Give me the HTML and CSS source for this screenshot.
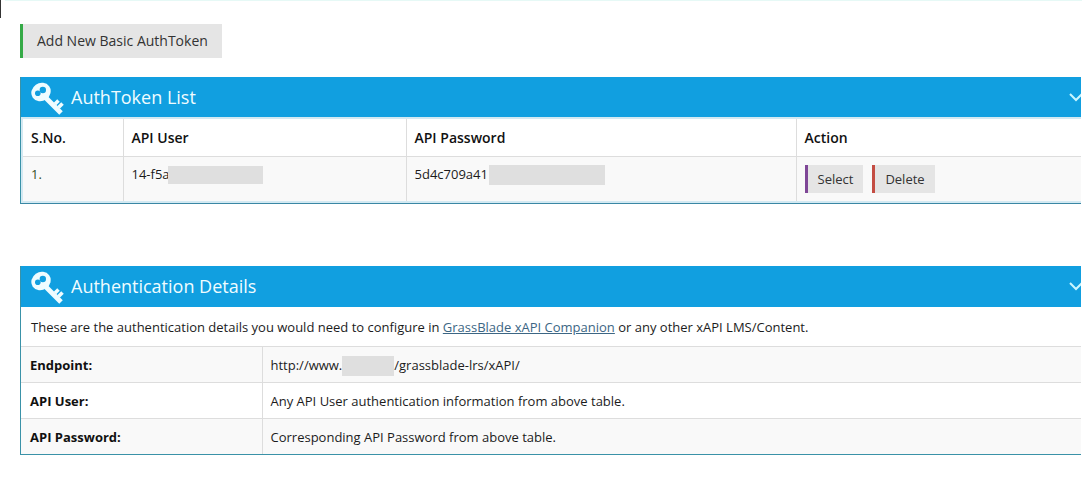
FILE: index.html
```html
<!DOCTYPE html>
<html lang="en">
<head>
<meta charset="utf-8">
<title>AuthTokens</title>
<link rel="stylesheet" href="styles.css">
</head>
<body>
<div class="edge"></div>
<main class="page">
  <button class="btn btn-add" type="button">Add New Basic AuthToken</button>

  <section class="panel panel-list">
    <header class="panel-head">
      <svg class="key" viewBox="0 0 34 36" aria-hidden="true">
        <ellipse class="bow" cx="11" cy="12" rx="10" ry="9" transform="rotate(-35 11 12)"/>
        <circle class="hole" cx="7.800" cy="13.300" r="2.800"/>
        <circle class="hole" cx="12.800" cy="10" r="3.200"/>
        <path d="M16 18L31 33" stroke-width="5"/>
        <path d="M25 24l3.500-3.500M28.500 27.500l4-4" stroke-width="3.600"/>
      </svg>
      <h2>AuthToken List</h2>
      <button class="toggle" type="button" aria-label="Collapse AuthToken List"><svg viewBox="0 0 14 10"><path d="M1 2l6 6 6-6"/></svg></button>
    </header>
    <table class="tokens">
      <colgroup><col class="c-no"><col class="c-user"><col class="c-pass"><col></colgroup>
      <thead><tr><th scope="col">S.No.</th><th scope="col">API User</th><th scope="col">API Password</th><th scope="col">Action</th></tr></thead>
      <tbody><tr>
        <td class="number">1.</td>
        <td>14-f5a<span class="mask mask-user"></span></td>
        <td>5d4c709a41<span class="mask mask-pass"></span></td>
        <td><div class="actions"><button class="btn btn-select" type="button">Select</button><button class="btn btn-delete" type="button">Delete</button></div></td>
      </tr></tbody>
    </table>
  </section>

  <section class="panel panel-details">
    <header class="panel-head">
      <svg class="key" viewBox="0 0 34 36" aria-hidden="true">
        <ellipse class="bow" cx="11" cy="12" rx="10" ry="9" transform="rotate(-35 11 12)"/>
        <circle class="hole" cx="7.800" cy="13.300" r="2.800"/>
        <circle class="hole" cx="12.800" cy="10" r="3.200"/>
        <path d="M16 18L31 33" stroke-width="5"/>
        <path d="M25 24l3.500-3.500M28.500 27.500l4-4" stroke-width="3.600"/>
      </svg>
      <h2>Authentication Details</h2>
      <button class="toggle" type="button" aria-label="Collapse Authentication Details"><svg viewBox="0 0 14 10"><path d="M1 2l6 6 6-6"/></svg></button>
    </header>
    <p class="intro">These are the authentication details you would need to configure in <a href="#">GrassBlade xAPI Companion</a> or any other xAPI LMS/Content.</p>
    <table class="details">
      <colgroup><col class="c-label"><col></colgroup>
      <tbody>
        <tr><th scope="row">Endpoint:</th><td>http://www.<span class="mask mask-host"></span>/grassblade-lrs/xAPI/</td></tr>
        <tr><th scope="row">API User:</th><td>Any API User authentication information from above table.</td></tr>
        <tr><th scope="row">API Password:</th><td>Corresponding API Password from above table.</td></tr>
      </tbody>
    </table>
  </section>
</main>
</body>
</html>
```
FILE: styles.css
```css
* { box-sizing: border-box; }

body {
  margin: 0;
  background: #fff;
  color: #1c1c1c;
  font: 13px/18px "Open Sans", "Noto Sans", sans-serif;
  overflow-x: hidden;
}

.edge {
  position: absolute;
  top: 0;
  left: 0;
  width: 1px;
  height: 18px;
  background: #333;
}

.page {
  border-top: 1px solid #e6f9f6;
  margin-left: 5px;
  padding: 23px 1px 24px 15px;
}

.btn {
  display: block;
  border: 0;
  border-left: 3px solid;
  background: #e5e5e5;
  font-family: inherit;
  white-space: nowrap;
}

.btn-add {
  height: 34px;
  padding: 0 14px 2px;
  border-color: #35aa47;
  color: #333;
  font-size: 14px;
}

.panel {
  border: 1px solid #3a92a8;
  border-top: 0;
  border-right: 0;
  overflow: hidden;
}

.panel-list { margin-top: 19px; }
.panel-details { margin-top: 62px; }

.panel-head {
  display: flex;
  align-items: center;
  height: 40px;
  margin-left: -1px;
  padding-left: 10px;
  background: #119fe0;
  color: #effcff;
}

.panel-details .panel-head { height: 41px; }

.panel-head h2 {
  flex: 1;
  margin: 0 0 0 7px;
  font-size: 18px;
  font-weight: 400;
  line-height: 24px;
}

.key {
  width: 34px;
  height: 36px;
  margin-top: 2px;
  fill: none;
  stroke: #effcff;
}

.bow { fill: #effcff; stroke: none; }
.hole { fill: #119fe0; stroke: none; }

.toggle {
  flex: none;
  width: 14px;
  height: 10px;
  margin-right: -2px;
  padding: 0;
  border: 0;
  background: none;
}

.toggle svg {
  display: block;
  fill: none;
  stroke: #c9f6ff;
  stroke-width: 2;
}

table {
  width: 100%;
  table-layout: fixed;
  border-collapse: collapse;
}

th, td {
  padding: 8px;
  border-left: 1px solid #ddd;
  text-align: left;
  vertical-align: top;
}

th:first-child, td:first-child { border-left: 0; }

.panel-list { border-bottom-color: #3a87a4; }

.tokens {
  border: 2px solid #d3e9f2;
  border-right: 0;
}

.tokens th {
  height: 38px;
  padding-top: 10px;
  color: #111;
  font-size: 14px;
  font-weight: 600;
}

.tokens td {
  height: 45px;
  border-top: 1px solid #ddd;
  background: #f9f9f9;
}

.tokens .number { color: #35501f; }

.c-no { width: 101px; }
.c-user { width: 283px; }
.c-pass { width: 390px; }
.c-label { width: 241px; }

.actions {
  display: flex;
  gap: 9px;
}

.btn-select, .btn-delete {
  height: 28px;
  padding: 0 10px;
  color: #333;
  font-size: 13px;
}

.btn-select { border-color: #7f4797; }
.btn-delete { border-color: #c44d43; }

.mask {
  display: inline-block;
  height: 20px;
  margin: -2px 0;
  background: #dfdfdf;
  vertical-align: middle;
}

.mask-user { width: 95px; height: 18px; margin-left: -2px; }
.mask-pass { width: 116px; margin-left: 1px; }
.mask-host { width: 52px; }

.intro {
  margin: 0;
  padding: 11px 10px 10px;
}

.intro a { color: #3c6684; }

.details th, .details td {
  padding: 9px 8px 8px;
  border-top: 1px solid #ddd;
}

.details th {
  padding-left: 9px;
  color: #111;
  font-weight: 700;
}

.details tr:nth-child(odd) { background: #f9f9f9; }
```
